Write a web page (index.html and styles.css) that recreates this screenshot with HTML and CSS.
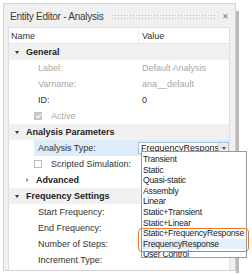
FILE: index.html
```html
<!DOCTYPE html>
<html>
<head>
<meta charset="utf-8">
<link rel="stylesheet" href="styles.css">
</head>
<body>
<div class="page">
  <div class="panel">
    <div class="titlebar">
      <span class="title">Entity Editor - Analysis</span>
      <span class="grip"></span>
      <span class="close">✕</span>
    </div>
    <div class="table">
      <div class="row head"><div class="c-name">Name</div><div class="c-val">Value</div></div>
      <div class="row group"><div class="c-name"><i class="exp"></i>General</div><div class="c-val"></div></div>
      <div class="row"><div class="c-name prop dis">Label:</div><div class="c-val dis">Default Analysis</div></div>
      <div class="row"><div class="c-name prop dis">Varname:</div><div class="c-val dis">ana__default</div></div>
      <div class="row"><div class="c-name prop">ID:</div><div class="c-val">0</div></div>
      <div class="row"><div class="c-name chk dis"><i class="box on"></i>Active</div><div class="c-val"></div></div>
      <div class="row group"><div class="c-name"><i class="exp"></i>Analysis Parameters</div><div class="c-val"></div></div>
      <div class="row sel"><div class="c-name prop">Analysis Type:</div><div class="c-val"><div class="combo"><span class="combo-text">FrequencyRespons</span><span class="combo-btn"><i></i></span></div></div></div>
      <div class="row"><div class="c-name chk"><i class="box"></i>Scripted Simulation:</div><div class="c-val"></div></div>
      <div class="row sub"><div class="c-name"><i class="col"></i>Advanced</div><div class="c-val"></div></div>
      <div class="row group"><div class="c-name"><i class="exp"></i>Frequency Settings</div><div class="c-val"></div></div>
      <div class="row"><div class="c-name prop">Start Frequency:</div><div class="c-val"></div></div>
      <div class="row"><div class="c-name prop">End Frequency:</div><div class="c-val"></div></div>
      <div class="row"><div class="c-name prop">Number of Steps:</div><div class="c-val"></div></div>
      <div class="row"><div class="c-name prop">Increment Type:</div><div class="c-val"></div></div>
    </div>
  </div>
  <div class="edge"></div>

  <ul class="list">
    <li>Transient</li>
    <li>Static</li>
    <li>Quasi-static</li>
    <li>Assembly</li>
    <li>Linear</li>
    <li>Static+Transient</li>
    <li>Static+Linear</li>
    <li>Static+FrequencyResponse</li>
    <li class="hl">FrequencyResponse</li>
    <li>User Control</li>
  </ul>
  <div class="callout"></div>
</div>
</body>
</html>
```

FILE: styles.css
```css
* { box-sizing: border-box; }
html, body { margin: 0; padding: 0; background: #fff; }
body {
  font-family: "Liberation Sans", Arial, sans-serif;
  font-size: 9px;
  color: #333;
  width: 252px;
  height: 275px;
  overflow: hidden;
}
.page {
  position: relative;
  display: flex;
  padding: 3px 0 0 3px;
  height: 275px;
}
.panel {
  width: 233px;
  height: 268px;
  background: #f0f0f0;
  border: 1px solid #d2d2d2;
  display: flex;
  flex-direction: column;
}
.edge {
  width: 3px;
  margin-top: 8px;
  height: 262px;
  background: #b9b9b9;
}
.titlebar {
  height: 23px;
  display: flex;
  align-items: center;
  padding: 1px 6px 0 6px;
}
.title {
  font-size: 10px;
  letter-spacing: -0.25px;
  color: #3a3a3a;
}
.grip {
  flex: 1;
  height: 5px;
  margin: 0 5px 0 8px;
  background-image: radial-gradient(circle, #b8b8b8 0.8px, transparent 1px);
  background-size: 3px 3px;
}
.close {
  font-size: 8px;
  color: #777;
}
.table {
  margin: 0 5px 0 4px;
  background: #fff;
  border: 1px solid #dedede;
  border-bottom: none;
  flex: 1;
}
.row {
  height: 16px;
  display: flex;
  align-items: center;
}
.c-name {
  width: 130px;
  display: flex;
  align-items: center;
  white-space: nowrap;
  height: 100%;
}
.c-val {
  flex: 1;
  padding-left: 3px;
  display: flex;
  align-items: center;
  height: 100%;
  white-space: nowrap;
}
.head { border-bottom: 1px solid #e2e2e2; }
.head .c-name { padding-left: 2px; border-right: 1px solid #ececec; }
.head .c-val { padding-left: 3px; }
.group { background: #f1f1f1; font-weight: bold; color: #222; }
.group .c-name { padding-left: 4px; }
.sub { font-weight: bold; color: #222; }
.sub .c-name { padding-left: 15px; }
.exp {
  display: inline-block;
  width: 0; height: 0;
  border-left: 2px solid transparent;
  border-right: 2px solid transparent;
  border-top: 3px solid #333;
  margin: 0 7px 0 2px;
}
.col {
  display: inline-block;
  width: 0; height: 0;
  border-top: 2px solid transparent;
  border-bottom: 2px solid transparent;
  border-left: 3px solid #999;
  margin: 0 7px 0 2px;
}
.prop { padding-left: 29px; }
.chk { padding-left: 25px; }
.box {
  display: inline-block;
  width: 8px; height: 8px;
  border: 1px solid #bdbdbd;
  background: #fff;
  margin-right: 9px;
  position: relative;
}
.box.on { background: #c9c9c9; border-color: #c2c2c2; }
.box.on::after {
  content: "";
  position: absolute;
  left: 2px; top: 0px;
  width: 2px; height: 4px;
  border-right: 1px solid #fff;
  border-bottom: 1px solid #fff;
  transform: rotate(40deg);
}
.dis { color: #a8a8a8; }
.sel { background: #ddecf8; }
.sel .c-name { background: linear-gradient(to right, #fff 0, #fff 25px, #ddecf8 25px); }
.combo {
  width: 91px;
  height: 12px;
  border: 1px solid #a9c4dd;
  background: #fff;
  display: flex;
  align-items: center;
}
.combo-text { flex: 1; padding-left: 2px; color: #222; overflow: hidden; }
.combo-btn {
  width: 10px;
  height: 100%;
  background: #eaeaea;
  border-left: 1px solid #d4d4d4;
  display: flex;
  align-items: center;
  justify-content: center;
}
.combo-btn i {
  width: 0; height: 0;
  border-left: 2px solid transparent;
  border-right: 2px solid transparent;
  border-top: 3px solid #555;
}
.list {
  position: absolute;
  left: 141px;
  top: 151px;
  width: 106px;
  margin: 0;
  padding: 2px 0 0 0;
  list-style: none;
  background: #fff;
  border: 1px solid #9a9a9a;
  height: 107px;
  overflow: hidden;
  font-size: 8.6px;
}
.list li {
  height: 10.6px;
  line-height: 10.6px;
  padding-left: 1px;
  color: #222;
  white-space: nowrap;
  letter-spacing: -0.2px;
}
.list li.hl { background: #e4f0fb; }
.callout {
  position: absolute;
  left: 138px;
  top: 228px;
  width: 111px;
  height: 24px;
  border: 1.5px solid #e87a30;
  border-radius: 4px;
}
```
